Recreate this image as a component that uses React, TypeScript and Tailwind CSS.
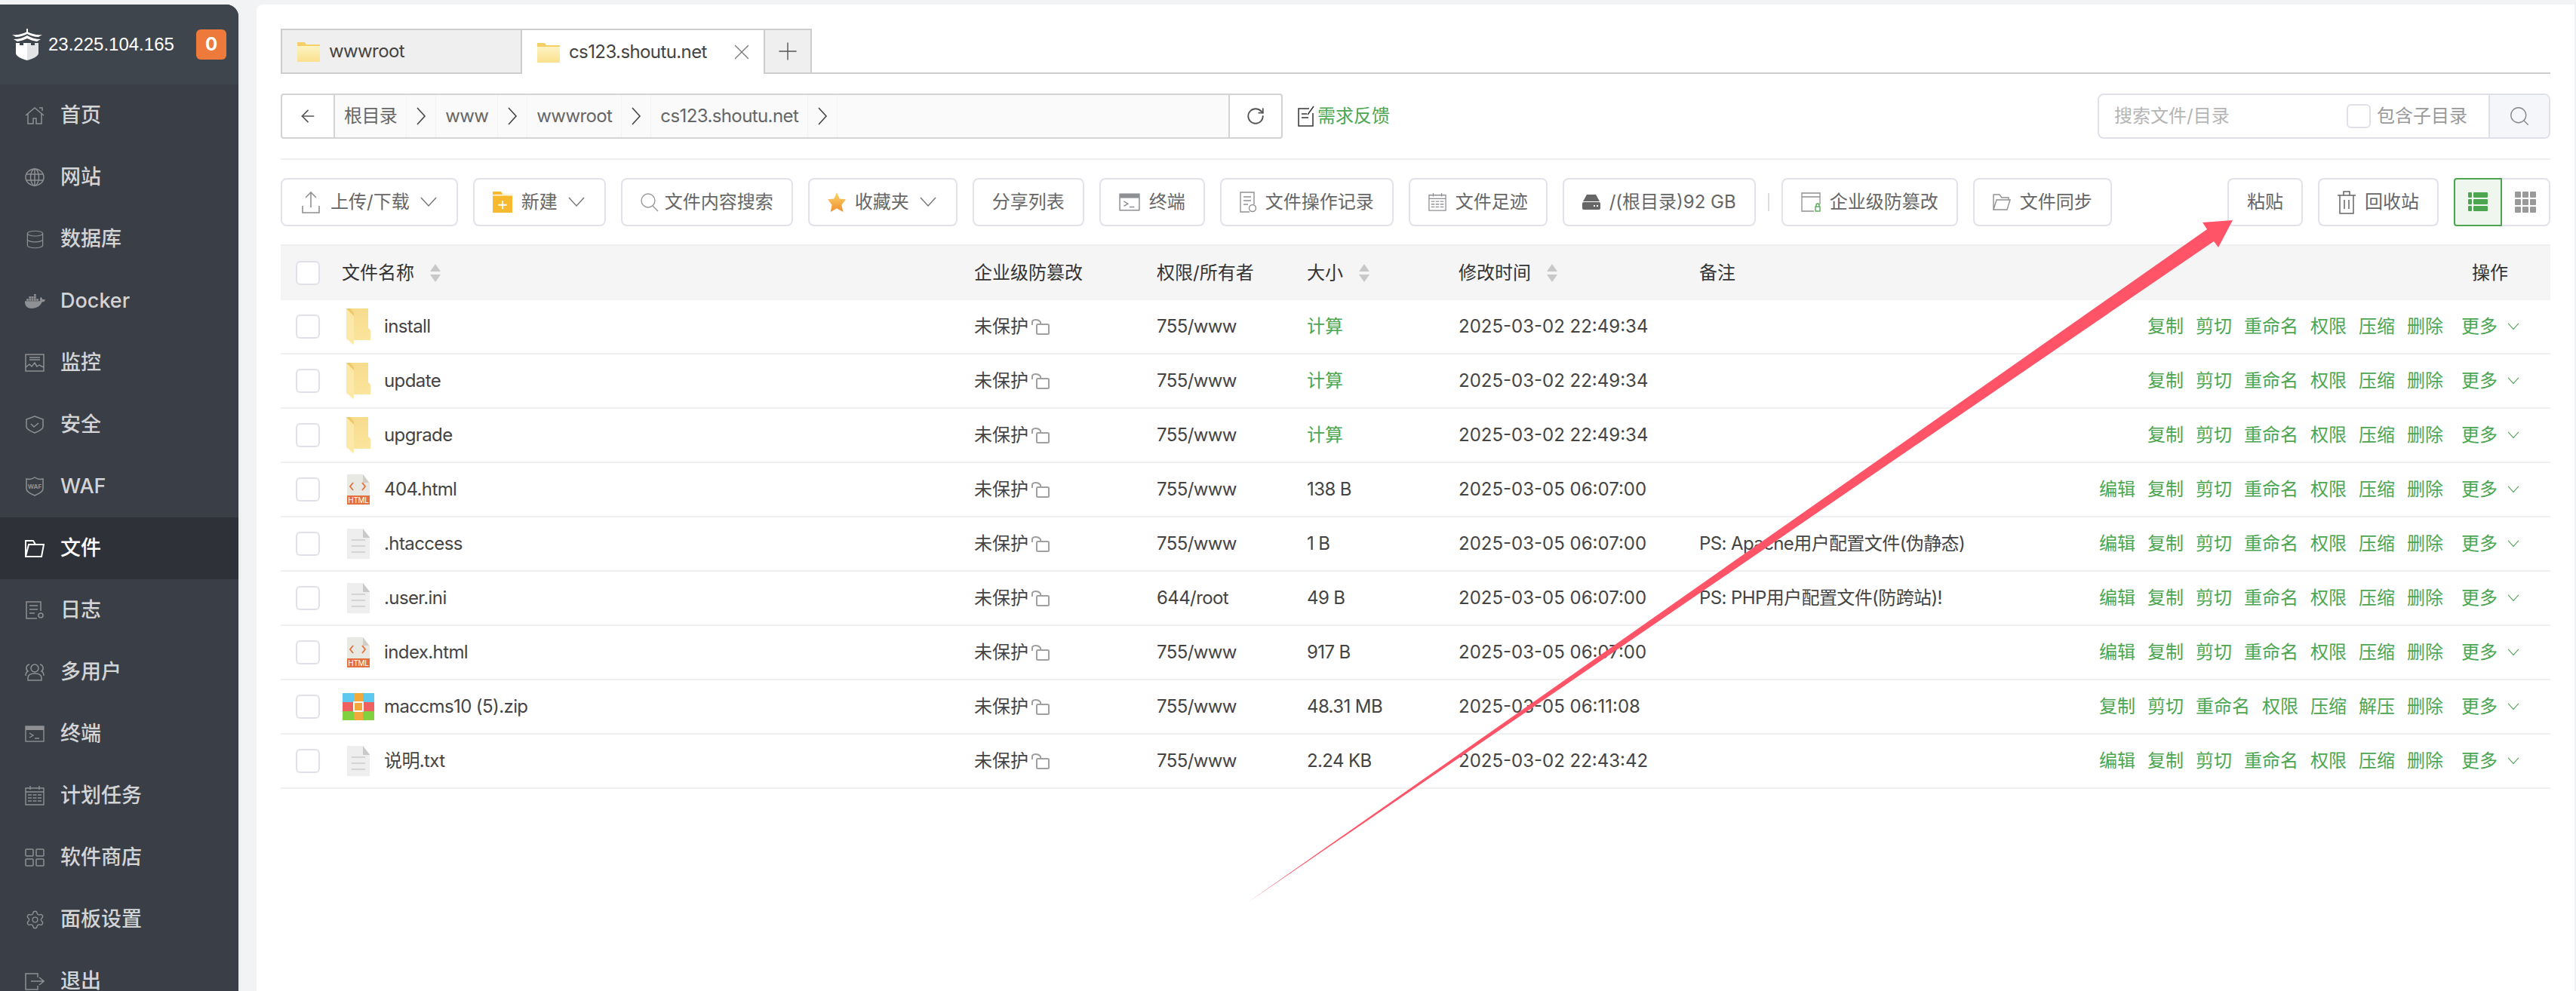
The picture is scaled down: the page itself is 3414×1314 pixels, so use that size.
import React from "react";
import { ArrowLeft, Plus, RotateCw, Search, Settings, X, Database } from "lucide-react";
import { FaDocker } from "react-icons/fa";

const G = "#8e9093";

function Line({ children, w = 26, h = 24, vb, color = G, sw = 1.5 }: { children: React.ReactNode; w?: number; h?: number; vb?: string; color?: string; sw?: number }) {
  return (
    <svg width={w} height={h} viewBox={vb ?? `0 0 ${w} ${h}`} fill="none" stroke={color} strokeWidth={sw} className="shrink-0">
      {children}
    </svg>
  );
}

const HomeIcon = () => (
  <Line>
    <path d="M1 12 13 2l12 10M4 10v13h7v-7h4v7h7V10M19 2h4v4" />
  </Line>
);
const GlobeIcon = () => (
  <Line>
    <ellipse cx="13" cy="12" rx="12" ry="11" />
    <ellipse cx="13" cy="12" rx="5.5" ry="11" />
    <path d="M13 1v22M2 8h22M2 16h22" />
  </Line>
);
const DbIcon = () => <Database size={27} color={G} strokeWidth={1.1} className="shrink-0" />;
const DockerIcon = () => <FaDocker size={27} color={G} className="shrink-0" />;
const MonitorIcon = () => (
  <Line>
    <path d="M1 1h24v22H1z" />
    <path d="M6 5h14M6 8h14M1 18l5-4 3 3 4-5 3 5 3-2 6 3" />
  </Line>
);
const ShieldIcon = () => (
  <Line>
    <path d="M13 1l11 4v10c0 3-6 6-11 8C8 21 2 18 2 15V5z" />
    <path d="M8 11l4 4 6-5" />
  </Line>
);
const WafIcon = () => (
  <svg width="26" height="26" viewBox="0 0 26 26" className="shrink-0">
    <path d="M13 1c3 2 7 3 11 2v13c0 4-6 7-11 9C8 23 2 20 2 16V3c4 1 8 0 11-2z" fill="none" stroke={G} strokeWidth="1.5" />
    <text x="13" y="16" textAnchor="middle" fontSize="8" fontWeight="700" fill={G} fontFamily="Inter">WAF</text>
  </svg>
);
const FolderNav = () => (
  <Line color="#fff" sw={2}>
    <path d="M1 23V2h10l3 5h11l-3 16H1zM1 23l4-16h9" />
  </Line>
);
const LogIcon = () => (
  <Line>
    <path d="M21 13V1H2v22h14M6 6h11M6 11h11M6 16h7" />
    <circle cx="21" cy="19" r="3" />
  </Line>
);
const UsersIcon = () => (
  <Line>
    <circle cx="13" cy="7" r="5" />
    <path d="M4 23v-3c0-4 4-6 9-6s9 2 9 6v3zM6 2a5 5 0 0 0-2 9c-2 1-3 3-3 6M20 2a5 5 0 0 1 2 9c2 1 3 3 3 6" />
  </Line>
);
const TermIcon = ({ w = 26, h = 22 }: { w?: number; h?: number }) => (
  <svg width={w} height={h} viewBox="0 0 26 22" className="shrink-0">
    <rect x="1" y="1" width="24" height="20" fill="none" stroke={G} strokeWidth="1.4" />
    <rect x="1" y="1" width="24" height="5" fill={G} />
    <path d="M6 10l5 3-5 3M13 17h6" fill="none" stroke={G} strokeWidth="1.4" />
  </svg>
);
const CalIcon = ({ w = 26, h = 26 }: { w?: number; h?: number }) => (
  <svg width={w} height={h} viewBox="0 0 26 26" fill="none" stroke={G} strokeWidth="1.4" className="shrink-0">
    <path d="M1 3h24v22H1zM1 8h24M7 0v5M19 0v5" />
    <path d="M4 12h18M4 16h18M4 20h18" strokeDasharray="5 1.5" />
  </svg>
);
const GridIcon = () => (
  <Line>
    <rect x="1" y="1" width="10" height="9" rx="1" />
    <rect x="15" y="1" width="10" height="9" rx="1" />
    <rect x="1" y="14" width="10" height="9" rx="1" />
    <rect x="15" y="14" width="10" height="9" rx="1" />
  </Line>
);
const GearIcon = () => <Settings size={27} color={G} strokeWidth={1.2} className="shrink-0" />;
const LogoutIcon = () => (
  <Line>
    <path d="M17 7V2H1v21h16v-5M8 12h16M19 7l6 5-6 5" />
  </Line>
);

const Logo = () => (
  <svg width="40" height="42" viewBox="0 0 40 42" className="shrink-0">
    <path d="M0 8c7 1 14-1 20-4 6 3 13 5 20 4l-5 3c-6 0-11-2-15-4-4 2-9 4-15 4z" fill="#fff" />
    <path d="M2 14c7 0 13-2 18-5 5 3 11 5 18 5l-5 3c-5-1-9-2-13-4-4 2-8 3-13 4z" fill="#fff" />
    <path d="M19 0h2v5h-2z" fill="#fff" />
    <path d="M5 19h5v3h5v-3h5v23C12 40 6 37 5 33z" fill="#fff" />
    <path d="M35 19h-5v3h-5v-3h-5v23c8-2 14-5 15-9z" fill="#e2e3e4" />
  </svg>
);

const navItems: [string, () => React.ReactElement][] = [
  ["首页", HomeIcon],
  ["网站", GlobeIcon],
  ["数据库", DbIcon],
  ["Docker", DockerIcon],
  ["监控", MonitorIcon],
  ["安全", ShieldIcon],
  ["WAF", WafIcon],
  ["文件", FolderNav],
  ["日志", LogIcon],
  ["多用户", UsersIcon],
  ["终端", () => <TermIcon />],
  ["计划任务", () => <CalIcon />],
  ["软件商店", GridIcon],
  ["面板设置", GearIcon],
  ["退出", LogoutIcon],
];

function Sidebar() {
  return (
    <aside className="w-79 shrink-0 rounded-tr-2xl bg-[#3a3e46] overflow-hidden shadow-md">
      <div className="h-26.5 flex items-center pl-4 pr-4 bg-[#3f454c]">
        <Logo />
        <span className="ml-2 flex-1 text-2xl text-white font-['Liberation_Sans',sans-serif]">23.225.104.165</span>
        <span className="w-10 h-10 rounded-md bg-[#ed7a3b] text-white text-2xl font-bold flex items-center justify-center">0</span>
      </div>
      {navItems.map(([name, Icon]) => {
        const active = name === "文件";
        return (
          <div key={name} className={`h-20.5 flex items-center gap-5 pl-8 text-[27px] font-medium ${active ? "bg-[#2e3138] text-white" : "text-[#d3d4d6]"}`}>
            <span className="w-7 flex justify-center">
              <Icon />
            </span>
            <span>{name}</span>
          </div>
        );
      })}
    </aside>
  );
}

const TabFolder = () => (
  <svg width="30" height="27" viewBox="0 0 30 27" className="shrink-0">
    <defs>
      <linearGradient id="tf" x1="0" y1="0" x2="0" y2="1">
        <stop offset="0" stopColor="#fdf3c4" />
        <stop offset="1" stopColor="#fbe08d" />
      </linearGradient>
    </defs>
    <path d="M0 1h10l2 3h18v23H0z" fill="#f7cf68" />
    <path d="M0 6h30v21H0z" fill="url(#tf)" />
  </svg>
);

function Tabs() {
  return (
    <div className="flex h-15 border-b-2 border-[#cdcdcd] mb-6.5">
      <div className="w-80 h-15 flex items-center gap-3 pl-5 border-2 border-[#cdcdcd] bg-[#efefef] text-[#444]">
        <TabFolder />
        <span className="tracking-tight">wwwroot</span>
      </div>
      <div className="w-80 h-15 flex items-center gap-3 pl-5 pr-3 bg-white border-t-2 border-[#cdcdcd] text-[#444]">
        <TabFolder />
        <span className="flex-1 tracking-tight">cs123.shoutu.net</span>
        <X size={34} color="#777" strokeWidth={0.9} />
      </div>
      <div className="w-16 h-15 flex items-center justify-center border-2 border-[#cdcdcd] bg-[#efefef]">
        <Plus size={38} color="#555" strokeWidth={0.9} />
      </div>
    </div>
  );
}

function Crumb({ text }: { text: string }) {
  return (
    <>
      <span className="px-3 text-[#666] tracking-tight">{text}</span>
      <span className="w-10 h-full flex items-center justify-center border-x border-[#f3f3f3]">
        <svg width="14" height="24" viewBox="0 0 14 24" fill="none" stroke="#444" strokeWidth="1.6">
          <path d="M2 1l10 11L2 23" />
        </svg>
      </span>
    </>
  );
}

function PathBar() {
  return (
    <div className="flex items-start pb-6.5 border-b-2 border-[#f0f0f0]">
      <div className="w-332 h-15 flex">
        <div className="w-18 flex items-center justify-center border-2 border-[#d4d4d4] rounded-l-sm">
          <ArrowLeft size={26} color="#555" strokeWidth={1.6} />
        </div>
        <div className="flex-1 flex items-center border-y-2 border-[#d4d4d4] bg-[#fafafa]">
          <Crumb text="根目录" />
          <Crumb text="www" />
          <Crumb text="wwwroot" />
          <Crumb text="cs123.shoutu.net" />
        </div>
        <div className="w-18 flex items-center justify-center border-2 border-[#d4d4d4] rounded-r-sm">
          <RotateCw size={26} color="#555" strokeWidth={1.7} />
        </div>
      </div>
      <div className="h-15 ml-5 flex items-center gap-1 text-[#4ca64f]">
        <svg width="22" height="28" viewBox="0 0 22 28" fill="none" stroke="#333" strokeWidth="1.5">
          <path d="M15 4H1v23h19V10M5 11h7M5 16h9M13 12l8-11" />
        </svg>
        <span>需求反馈</span>
      </div>
      <div className="ml-auto w-150 h-15 flex border-2 border-[#e0e0e8] rounded-lg overflow-hidden">
        <span className="flex-1 pl-5 leading-14 text-[#b5b5b5]">搜索文件/目录</span>
        <span className="flex items-center gap-2 pr-7 text-[#999]">
          <span className="w-8 h-8 border-2 border-[#e0e0e8] rounded-md" />
          包含子目录
        </span>
        <span className="w-20 flex items-center justify-center bg-[#f5f6fa] border-l-2 border-[#e0e0e8]">
          <Search size={30} color="#888" strokeWidth={1.1} />
        </span>
      </div>
    </div>
  );
}

function Btn({ children, gap = "gap-3" }: { children: React.ReactNode; gap?: string }) {
  return (
    <div className={`h-16 flex items-center ${gap} px-6 border-2 border-[#e2e2ea] rounded-lg text-[#666] whitespace-nowrap`}>
      {children}
    </div>
  );
}

const Chev = ({ color = "#777", w = 26, h = 14 }: { color?: string; w?: number; h?: number }) => (
  <svg width={w} height={h} viewBox="0 0 26 14" fill="none" stroke={color} strokeWidth="1.5" className="shrink-0">
    <path d="M3 1l10 11L23 1" />
  </svg>
);

function Toolbar() {
  return (
    <div className="mt-6 flex gap-5">
      <Btn>
        <svg width="28" height="30" viewBox="-2 0 28 30" fill="none" stroke={G} strokeWidth="1.6">
          <path d="M12 22V2M5 9l7-7 7 7M1 20v9h22v-9" />
        </svg>
        上传/下载
        <Chev />
      </Btn>
      <Btn>
        <svg width="26" height="30" viewBox="0 0 28 30">
          <path d="M0 0h12l2 4h14v26H0z" fill="#f6b92f" />
          <path d="M0 5h28" stroke="#fff" strokeWidth="1.5" />
          <path d="M14 13v12M8 19h12" stroke="#fff" strokeWidth="2" />
        </svg>
        新建
        <Chev />
      </Btn>
      <Btn gap="gap-2">
        <svg width="24" height="26" viewBox="0 0 24 26" fill="none" stroke="#999" strokeWidth="1.4">
          <circle cx="10" cy="11" r="9" />
          <path d="M16 18l7 7" />
        </svg>
        文件内容搜索
      </Btn>
      <Btn>
        <svg width="24" height="28" viewBox="0 0 26 28">
          <defs>
            <linearGradient id="st" x1="0" y1="0" x2="0" y2="1">
              <stop offset="0" stopColor="#fbd66a" />
              <stop offset="1" stopColor="#f08d2e" />
            </linearGradient>
          </defs>
          <path d="M13 0l4 9 9 1-6 8 2 10-9-5-9 5 2-10-6-8 9-1z" fill="url(#st)" />
        </svg>
        收藏夹
        <Chev />
      </Btn>
      <Btn>分享列表</Btn>
      <Btn>
        <TermIcon w={28} h={28} />
        终端
      </Btn>
      <Btn>
        <svg width="22" height="28" viewBox="0 0 22 28" fill="none" stroke={G} strokeWidth="1.4">
          <path d="M13 27H1V1h18v16M5 7h10M5 12h10M5 17h6" />
          <circle cx="17" cy="22" r="4.5" />
        </svg>
        文件操作记录
      </Btn>
      <Btn>
        <CalIcon w={24} h={28} />
        文件足迹
      </Btn>
      <div className="flex items-center gap-4">
        <Btn>
          <svg width="24" height="20" viewBox="0 0 24 20">
            <path d="M6 0h12l5 9H1z" fill="#666" />
            <rect x="0" y="10" width="24" height="10" rx="2" fill="#666" />
            <path d="M15 15h2M19 15h2" stroke="#fff" strokeWidth="2" />
          </svg>
          <span>/(根目录)92 GB</span>
        </Btn>
        <span className="w-0.5 h-6 bg-[#ddd]" />
        <Btn>
          <svg width="26" height="26" viewBox="0 0 26 26" fill="none" stroke={G} strokeWidth="1.3">
            <path d="M17 25H1V1h24v15M1 6h24" />
            <rect x="19" y="19" width="6" height="6" stroke="#4ca64f" />
            <path d="M20 19v-2a2 2 0 0 1 4 0v2" stroke="#4ca64f" />
          </svg>
          企业级防篡改
        </Btn>
      </div>
      <Btn>
        <svg width="24" height="22" viewBox="0 0 24 22" fill="none" stroke={G} strokeWidth="1.4">
          <path d="M1 21V1h8l3 4h9v3M1 21l4-13h18l-4 13z" />
        </svg>
        文件同步
      </Btn>
      <div className="ml-auto flex gap-5">
        <Btn>粘贴</Btn>
        <Btn>
          <svg width="24" height="32" viewBox="0 0 24 32" fill="none" stroke="#666" strokeWidth="1.5">
            <path d="M0 7h24M8 7V2h8v5M3 7v24h18V7M9 13v12M15 13v12" />
          </svg>
          回收站
        </Btn>
        <div className="flex h-16">
          <div className="w-16 flex flex-col items-center justify-center gap-0.5 border-2 border-[#4ca64f] rounded-l-sm bg-[#eef6ee]">
            <ListGlyph />
          </div>
          <div className="w-16 flex items-center justify-center border-2 border-l-0 border-[#e2e2ea] rounded-r-lg">
            <svg width="28" height="28" viewBox="0 0 28 28" fill="#999">
              {[0, 10, 20].flatMap((y) =>
                [0, 10, 20].map((x) => <rect key={`${x}${y}`} x={x} y={y} width="8" height="8" rx="1" />)
              )}
            </svg>
          </div>
        </div>
      </div>
    </div>
  );
}

const ListGlyph = () => (
  <svg width="26" height="26" viewBox="0 0 26 26" fill="#4ca64f">
    {[0, 9, 18].map((y) => (
      <g key={y}>
        <rect x="0" y={y} width="5" height="7" rx="1" />
        <rect x="7" y={y} width="19" height="7" rx="1" />
      </g>
    ))}
  </svg>
);

const Sort = () => (
  <svg width="16" height="24" viewBox="0 0 16 24" fill="#c8c8c8" className="shrink-0">
    <path d="M8 0l7 10H1zM8 24L1 14h14z" />
  </svg>
);

const Box = () => <span className="w-8 h-8 bg-white border-2 border-[#e0e0e8] rounded-md" />;

const cols = "grid grid-cols-[81px_838px_242px_199px_201px_319px_1fr] items-center";

function HeadCell({ text, sort }: { text: string; sort?: boolean }) {
  return (
    <div className="flex items-center gap-5 text-[#333]">
      {text}
      {sort && <Sort />}
    </div>
  );
}

function FolderFile() {
  return (
    <svg width="32" height="48" viewBox="0 0 32 48" className="shrink-0">
      <defs>
        <linearGradient id="ff" x1="0" y1="0" x2="0" y2="1">
          <stop offset="0" stopColor="#f7dc8e" />
          <stop offset="1" stopColor="#fbe59e" />
        </linearGradient>
      </defs>
      <path d="M0 0h29v26l3 3v13H10V48L0 40z" fill="url(#ff)" />
      <path d="M0 0l10 10v38L0 40z" fill="#fce9a8" />
      <path d="M10 10L0 0h5l5 6z" fill="#eec96c" />
    </svg>
  );
}

function PlainFile() {
  return (
    <svg width="30" height="40" viewBox="0 0 30 40" className="shrink-0">
      <path d="M0 0h21l9 11v29H0z" fill="#eeeeee" />
      <path d="M21 0l9 12h-9z" fill="#c9c9c9" />
      <path d="M6 15h18M6 23h18M6 31h18" stroke="#d4d4d4" strokeWidth="2" />
    </svg>
  );
}

function HtmlFile() {
  return (
    <div className="relative w-7.5 h-10 shrink-0">
      <svg width="30" height="40" viewBox="0 0 30 40">
        <path d="M0 0h21l9 11v17H0z" fill="#e9e9e3" />
        <path d="M21 0l8 11h-8z" fill="#cfcfc8" />
        <path d="M8 11l-4 5 4 5M20 11l4 5-4 5" fill="none" stroke="#e2703f" strokeWidth="1.8" />
        <rect x="0" y="28" width="30" height="12" fill="#e2703f" />
      </svg>
      <span className="absolute left-0 right-0 bottom-0 text-center text-[10px] leading-3 tracking-tight text-white">HTML</span>
    </div>
  );
}

function ZipFile() {
  return (
    <svg width="42" height="36" viewBox="0 0 42 36" className="shrink-0">
      <rect width="42" height="12" fill="#5fc8ee" />
      <rect y="12" width="42" height="12" fill="#ef6060" />
      <rect y="24" width="42" height="12" fill="#80d040" />
      <rect x="15" width="12" height="36" fill="#f2a93b" />
      <rect x="15" y="12" width="12" height="12" fill="#f2a93b" stroke="#fff" strokeWidth="2" />
    </svg>
  );
}

function LockOpen() {
  return (
    <svg width="24" height="24" viewBox="0 0 24 24" fill="none" stroke="#a0a0a0" strokeWidth="2" className="shrink-0">
      <rect x="7" y="9" width="16" height="13" rx="1.5" />
      <path d="M1 10V6c0-3 7-5 11 0v3" />
    </svg>
  );
}

type Kind = "folder" | "file" | "html" | "zip";
const rows: { name: string; kind: Kind; perm: string; size: string; time: string; note?: string }[] = [
  { name: "install", kind: "folder", perm: "755/www", size: "计算", time: "2025-03-02 22:49:34" },
  { name: "update", kind: "folder", perm: "755/www", size: "计算", time: "2025-03-02 22:49:34" },
  { name: "upgrade", kind: "folder", perm: "755/www", size: "计算", time: "2025-03-02 22:49:34" },
  { name: "404.html", kind: "html", perm: "755/www", size: "138 B", time: "2025-03-05 06:07:00" },
  { name: ".htaccess", kind: "file", perm: "755/www", size: "1 B", time: "2025-03-05 06:07:00", note: "PS: Apache用户配置文件(伪静态)" },
  { name: ".user.ini", kind: "file", perm: "644/root", size: "49 B", time: "2025-03-05 06:07:00", note: "PS: PHP用户配置文件(防跨站)!" },
  { name: "index.html", kind: "html", perm: "755/www", size: "917 B", time: "2025-03-05 06:07:00" },
  { name: "maccms10 (5).zip", kind: "zip", perm: "755/www", size: "48.31 MB", time: "2025-03-05 06:11:08" },
  { name: "说明.txt", kind: "file", perm: "755/www", size: "2.24 KB", time: "2025-03-02 22:43:42" },
];

const actionsFor = (k: Kind) => {
  if (k === "folder") return ["复制", "剪切", "重命名", "权限", "压缩", "删除"];
  if (k === "zip") return ["复制", "剪切", "重命名", "权限", "压缩", "解压", "删除"];
  return ["编辑", "复制", "剪切", "重命名", "权限", "压缩", "删除"];
};

function FileIcon({ kind }: { kind: Kind }) {
  if (kind === "folder") return <FolderFile />;
  if (kind === "html") return <HtmlFile />;
  if (kind === "zip") return <ZipFile />;
  return <PlainFile />;
}

function Table() {
  return (
    <div className="mt-6">
      <div className={`${cols} h-18.5 border-t-2 border-[#f0f0f0] bg-[#f5f5f6]`}>
        <div className="pl-5 flex">
          <Box />
        </div>
        <HeadCell text="文件名称" sort />
        <HeadCell text="企业级防篡改" />
        <HeadCell text="权限/所有者" />
        <HeadCell text="大小" sort />
        <HeadCell text="修改时间" sort />
        <div className="flex items-center justify-between pr-14 text-[#333]">
          <span>备注</span>
          <span>操作</span>
        </div>
      </div>
      {rows.map((r) => (
        <div key={r.name} className={`${cols} h-18 border-b-2 border-[#f0f0f0] text-[#444]`}>
          <div className="pl-5 flex">
            <Box />
          </div>
          <div className="flex items-center gap-3 tracking-tight">
            <span className="w-11 flex justify-center shrink-0">
              <FileIcon kind={r.kind} />
            </span>
            <span>{r.name}</span>
          </div>
          <div className="flex items-center gap-1">
            未保护
            <LockOpen />
          </div>
          <div className="tracking-tight">{r.perm}</div>
          <div className={r.size === "计算" ? "text-[#4ca64f]" : "tracking-tight"}>{r.size}</div>
          <div className="whitespace-nowrap">{r.time}</div>
          <div className="flex items-center min-w-0">
            <span className="flex-1 whitespace-nowrap tracking-tight">{r.note}</span>
            <div className="flex items-center gap-4 pr-10 text-[#4ca64f] whitespace-nowrap">
              {actionsFor(r.kind).map((a) => (
                <span key={a}>{a}</span>
              ))}
              <span className="ml-2 flex items-center gap-3">
                更多
                <Chev color="#4ca64f" w={18} h={10} />
              </span>
            </div>
          </div>
        </div>
      ))}
    </div>
  );
}

function Arrow() {
  return (
    <svg width="3414" height="1314" viewBox="0 0 3414 1314" className="absolute inset-0 pointer-events-none">
      <path d="M1653 1197L2925 304l-6-9 40-3-19 36-6-8z" fill="#ff5468" />
    </svg>
  );
}

export default function App() {
  return (
    <div className="relative h-screen overflow-hidden bg-[#f2f3f4] flex pt-1.5 pr-0.5 text-2xl font-['Inter','Noto_Sans_CJK_SC',sans-serif]">
      <Sidebar />
      <main className="ml-6 flex-1 bg-white rounded-tl-lg px-8 pt-8">
        <Tabs />
        <PathBar />
        <Toolbar />
        <Table />
      </main>
      <Arrow />
    </div>
  );
}
